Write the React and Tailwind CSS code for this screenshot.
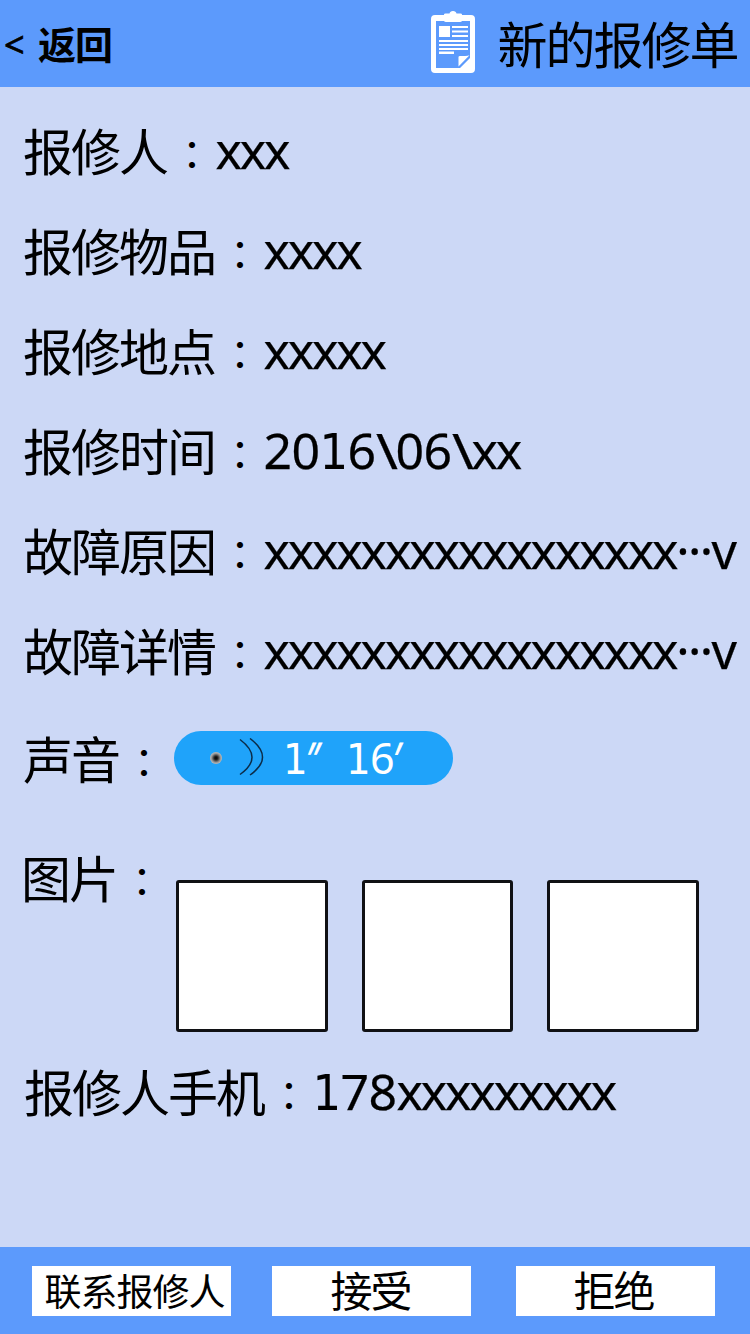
const CJK = "font-['Noto_Sans_CJK_SC',sans-serif]";

function Label({ children }) {
  return (
    <span className={`${CJK} flex shrink-0 leading-[98px] tracking-[-2px]`}>
      {children}
      <span className="mt-[7px] w-[48px] pl-[5px] font-['Noto_Sans_CJK_TC',sans-serif] text-[40px] leading-[92px]">：</span>
    </span>
  );
}

function Value({ children }) {
  return (
    <span className="block whitespace-pre pl-[0.5px] font-['Noto_Sans',sans-serif] leading-[100px] tracking-[-2.17px] [-webkit-text-stroke:0.25px_black]">
      {children}
    </span>
  );
}

function Digits({ text }) {
  return (
    <span className="tracking-[-0.6px]">
      {text.split("").map((c, i) =>
        c === "1" ? (
          <span key={i} className="font-['DejaVu_Sans_Condensed','DejaVu_Sans',sans-serif] leading-none [-webkit-text-stroke:0px]">
            {c}
          </span>
        ) : (
          c
        )
      )}
    </span>
  );
}

function Backslash() {
  return <span className="inline-block w-[20px] origin-left scale-x-118 tracking-normal">\</span>;
}

function Row({ label, children }) {
  return (
    <div className="flex h-[100px] pl-[23px]">
      <Label>{label}</Label>
      <Value>{children}</Value>
    </div>
  );
}

function ClipboardIcon() {
  return (
    <svg width="44" height="62" viewBox="0 0 44 62" fill="none" className="mb-[3px]">
      <path
        fill="#fff"
        fillRule="evenodd"
        d="M4 4H13V3.5Q13 2.5 14.5 2.5H18.5Q19 0 22 0T25.5 2.5H29.5Q31 2.5 31 3.5V4H40Q44 4 44 8V58Q44 62 40 62H4Q0 62 0 58V8Q0 4 4 4ZM5 10V57H29L39 47V10H31Q30.500 11 29 11H15Q13.500 11 13 10Z"
      />
      <path
        fill="#fff"
        d="M8 15H19V26H8ZM21 15H37V17H21ZM21 19.500H37V21.500H21ZM21 24H37V26H21ZM8 29H37V31H8ZM8 33H37V35H8ZM8 37H37V39H8ZM8 40.500H23V43H8ZM27.500 46Q27.500 45 29 45H34Q37 45 38.500 44.300L27.500 55.500Z"
      />
    </svg>
  );
}

function SoundIcon() {
  return (
    <svg width="56" height="40" viewBox="0 0 56 40" fill="none">
      <defs>
        <radialGradient id="dot">
          <stop offset="0" stopColor="#000" />
          <stop offset=".3" stopColor="#222" />
          <stop offset=".75" stopColor="#999" />
          <stop offset="1" stopColor="#bbb" />
        </radialGradient>
      </defs>
      <circle cx="7" cy="20" r="6" fill="url(#dot)" />
      <path d="M31 1.500Q55 19.500 31 36.500M41 0.500Q66 19.500 41 37" stroke="#0c2c48" strokeWidth="1.500" />
    </svg>
  );
}

function Prime({ double = false }) {
  return (
    <span className={`inline-block origin-top-left scale-x-80 [-webkit-text-stroke:0.8px_white] ${double ? "w-[16px]" : "w-[10px]"}`}>
      {double ? "″" : "′"}
    </span>
  );
}

function Action({ children, className }) {
  return (
    <button className={`${CJK} flex h-[50px] w-[199px] items-center justify-center whitespace-nowrap bg-white ${className}`}>
      {children}
    </button>
  );
}

export default function App() {
  return (
    <div className="flex h-[1334px] w-[750px] flex-col overflow-hidden bg-[#ccd8f6] text-[50px] text-black">
      <header className="flex h-[87px] shrink-0 items-center justify-between bg-[#5c9afc] pl-1 pr-[12.5px]">
        <div className="flex items-center text-[38px] leading-[85px]">
          <span className="w-[34px] pt-[2px] font-['Noto_Sans',sans-serif] text-[36px] [-webkit-text-stroke:0.7px_black]">&lt;</span>
          <span className={`${CJK} pb-[2px] font-bold tracking-[-1px]`}>返回</span>
        </div>
        <div className="flex items-center">
          <ClipboardIcon />
          <h1 className={`${CJK} ml-[23px] pb-[2px] text-[50px] leading-[85px] tracking-[-2px]`}>新的报修单</h1>
        </div>
      </header>

      <main className="flex h-[1160px] shrink-0 flex-col pt-[13px]">
        <Row label="报修人">xxx</Row>
        <Row label="报修物品">xxxx</Row>
        <Row label="报修地点">xxxxx</Row>
        <Row label="报修时间">
          <Digits text="2016" /><Backslash /><Digits text="06" /><Backslash />xx
        </Row>
        <Row label="故障原因">xxxxxxxxxxxxxxxxx<span className="tracking-[-1.7px]">···</span>v</Row>
        <Row label="故障详情">xxxxxxxxxxxxxxxxx<span className="tracking-[-1.7px]">···</span>v</Row>

        <div className="mt-[7px] flex h-[100px] items-center pl-[23px]">
          <Label>声音</Label>
          <div className="ml-[7px] mt-px flex h-[54px] w-[279px] items-center rounded-full bg-[#1fa3fa] pl-[35px]">
            <SoundIcon />
            <div className="ml-[18px] flex whitespace-pre font-['Noto_Sans',sans-serif] text-[43px] leading-[54px] text-white">
              <span className="w-[63px]"><Digits text="1" /><Prime double /></span>
              <span><Digits text="16" /><Prime /></span>
            </div>
          </div>
        </div>

        <div className="mt-[20px] flex h-[186px] pl-[21px]">
          <Label>图片</Label>
          <div className="ml-[11px] mt-[53px] flex gap-[34px]">
            {[0, 1, 2].map((i) => (
              <div key={i} className="size-[151.500px] rounded-[3px] border-[3px] border-[#101114] bg-white" />
            ))}
          </div>
        </div>

        <div className="mt-[28px] flex h-[100px] pl-[24px]">
          <Label>报修人手机</Label>
          <Value><Digits text="178" />xxxxxxxxx</Value>
        </div>
      </main>

      <footer className="flex h-[87px] shrink-0 items-start bg-[#5c9afc] pl-8 pt-[19px]">
        <Action className="pl-[6px] text-[37px] tracking-[-1px]">联系报修人</Action>
        <Action className="ml-[41px] pb-[6px] pr-[2px] text-[42px] tracking-[-2px]">接受</Action>
        <Action className="ml-[45px] pb-[6px] pr-[4px] text-[42px] tracking-[-2px]">拒绝</Action>
      </footer>
    </div>
  );
}
